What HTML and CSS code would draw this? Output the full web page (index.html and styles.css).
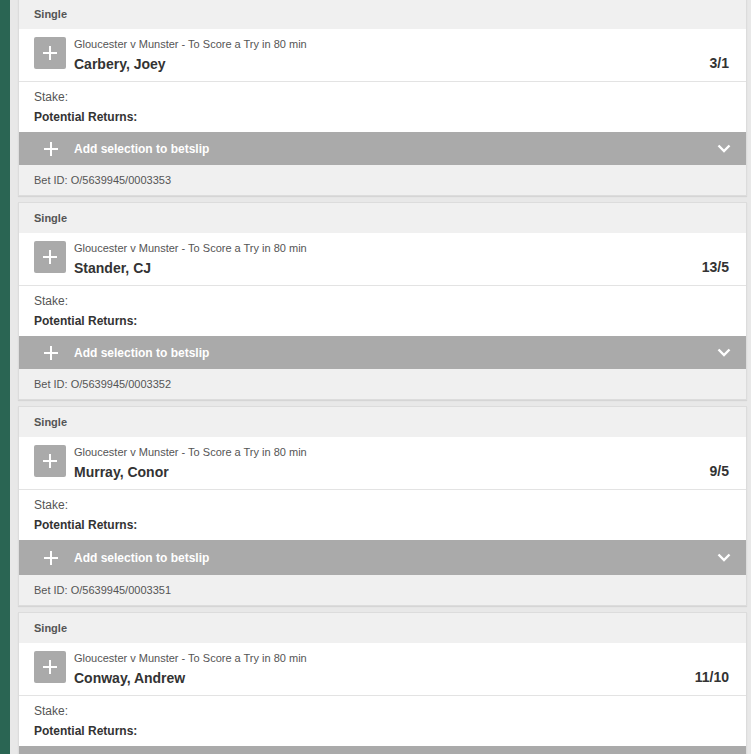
FILE: index.html
```html
<!DOCTYPE html>
<html>
<head>
<meta charset="utf-8">
<link rel="stylesheet" href="styles.css">
</head>
<body>
<div class="page">
  <aside class="rail"></aside>
  <main class="slips">
    <section class="card card--first">
      <div class="card-head">Single</div>
      <div class="sel">
        <span class="sel-box"><svg width="16" height="16" viewBox="0 0 16 16"><path d="M8 1v14M1 8h14" stroke="#fff" stroke-width="2"/></svg></span>
        <div class="sel-info">
          <div class="sel-event">Gloucester v Munster - To Score a Try in 80 min</div>
          <div class="sel-name">Carbery, Joey</div>
        </div>
        <div class="sel-odds">3/1</div>
      </div>
      <div class="stake">
        <div class="stake-label">Stake:</div>
        <div class="stake-returns">Potential Returns:</div>
      </div>
      <div class="add-bar">
        <svg class="add-plus" width="16" height="16" viewBox="0 0 16 16"><path d="M8 1v14M1 8h14" stroke="#fff" stroke-width="2"/></svg>
        <span class="add-text">Add selection to betslip</span>
        <svg class="add-chev" width="14" height="9" viewBox="0 0 14 9"><path d="M1.5 1.5l5.5 5.5 5.5-5.5" fill="none" stroke="#fff" stroke-width="2.4"/></svg>
      </div>
      <div class="bet-id">Bet ID: O/5639945/0003353</div>
    </section>

    <section class="card">
      <div class="card-head">Single</div>
      <div class="sel">
        <span class="sel-box"><svg width="16" height="16" viewBox="0 0 16 16"><path d="M8 1v14M1 8h14" stroke="#fff" stroke-width="2"/></svg></span>
        <div class="sel-info">
          <div class="sel-event">Gloucester v Munster - To Score a Try in 80 min</div>
          <div class="sel-name">Stander, CJ</div>
        </div>
        <div class="sel-odds">13/5</div>
      </div>
      <div class="stake">
        <div class="stake-label">Stake:</div>
        <div class="stake-returns">Potential Returns:</div>
      </div>
      <div class="add-bar">
        <svg class="add-plus" width="16" height="16" viewBox="0 0 16 16"><path d="M8 1v14M1 8h14" stroke="#fff" stroke-width="2"/></svg>
        <span class="add-text">Add selection to betslip</span>
        <svg class="add-chev" width="14" height="9" viewBox="0 0 14 9"><path d="M1.5 1.5l5.5 5.5 5.5-5.5" fill="none" stroke="#fff" stroke-width="2.4"/></svg>
      </div>
      <div class="bet-id">Bet ID: O/5639945/0003352</div>
    </section>

    <section class="card">
      <div class="card-head">Single</div>
      <div class="sel">
        <span class="sel-box"><svg width="16" height="16" viewBox="0 0 16 16"><path d="M8 1v14M1 8h14" stroke="#fff" stroke-width="2"/></svg></span>
        <div class="sel-info">
          <div class="sel-event">Gloucester v Munster - To Score a Try in 80 min</div>
          <div class="sel-name">Murray, Conor</div>
        </div>
        <div class="sel-odds">9/5</div>
      </div>
      <div class="stake">
        <div class="stake-label">Stake:</div>
        <div class="stake-returns">Potential Returns:</div>
      </div>
      <div class="add-bar add-bar--tall">
        <svg class="add-plus" width="16" height="16" viewBox="0 0 16 16"><path d="M8 1v14M1 8h14" stroke="#fff" stroke-width="2"/></svg>
        <span class="add-text">Add selection to betslip</span>
        <svg class="add-chev" width="14" height="9" viewBox="0 0 14 9"><path d="M1.5 1.5l5.5 5.5 5.5-5.5" fill="none" stroke="#fff" stroke-width="2.4"/></svg>
      </div>
      <div class="bet-id">Bet ID: O/5639945/0003351</div>
    </section>

    <section class="card">
      <div class="card-head">Single</div>
      <div class="sel">
        <span class="sel-box"><svg width="16" height="16" viewBox="0 0 16 16"><path d="M8 1v14M1 8h14" stroke="#fff" stroke-width="2"/></svg></span>
        <div class="sel-info">
          <div class="sel-event">Gloucester v Munster - To Score a Try in 80 min</div>
          <div class="sel-name">Conway, Andrew</div>
        </div>
        <div class="sel-odds">11/10</div>
      </div>
      <div class="stake">
        <div class="stake-label">Stake:</div>
        <div class="stake-returns">Potential Returns:</div>
      </div>
      <div class="add-bar">
        <svg class="add-plus" width="16" height="16" viewBox="0 0 16 16"><path d="M8 1v14M1 8h14" stroke="#fff" stroke-width="2"/></svg>
        <span class="add-text">Add selection to betslip</span>
        <svg class="add-chev" width="14" height="9" viewBox="0 0 14 9"><path d="M1.5 1.5l5.5 5.5 5.5-5.5" fill="none" stroke="#fff" stroke-width="2.4"/></svg>
      </div>
      <div class="bet-id">Bet ID: O/5639945/0003350</div>
    </section>
  </main>
</div>
</body>
</html>
```

FILE: styles.css
```css
html, body {
  margin: 0;
  padding: 0;
  height: 100%;
  overflow: hidden;
}

body {
  font-family: "Liberation Sans", Arial, sans-serif;
  background: #e8e8e8;
  color: #333;
}

.page {
  display: flex;
  min-height: 100%;
}

.rail {
  flex: 0 0 10px;
  background: #2a6553;
}

.slips {
  flex: 1;
  display: flex;
  flex-direction: column;
  gap: 6px;
  padding: 0 4px 0 8px;
}

.card {
  background: #fff;
  border: 1px solid #dcdcdc;
  box-shadow: 0 1px 1px rgba(0, 0, 0, 0.08);
  flex-shrink: 0;
}

.card--first {
  margin-top: -2px;
}

.card-head {
  height: 30px;
  display: flex;
  align-items: center;
  padding-left: 15px;
  background: #f0f0f0;
  font-size: 11px;
  font-weight: bold;
  color: #555;
}

.sel {
  height: 53px;
  box-sizing: border-box;
  padding: 8px 17px 8px 15px;
  display: flex;
  align-items: flex-start;
  border-bottom: 1px solid #e3e3e3;
}

.sel-box {
  width: 32px;
  height: 32px;
  border-radius: 2px;
  background: #aaaaaa;
  display: flex;
  align-items: center;
  justify-content: center;
  flex-shrink: 0;
}

.sel-info {
  flex: 1;
  margin-left: 8px;
}

.sel-event {
  font-size: 11px;
  line-height: 14px;
  color: #555;
}

.sel-name {
  margin-top: 4px;
  font-size: 14px;
  line-height: 18px;
  font-weight: bold;
  color: #333;
}

.sel-odds {
  align-self: flex-end;
  margin-bottom: 1px;
  font-size: 14px;
  line-height: 18px;
  font-weight: bold;
  color: #333;
}

.stake {
  height: 50px;
  box-sizing: border-box;
  padding: 5px 15px;
  font-size: 12px;
  line-height: 20px;
}

.stake-label {
  color: #555;
}

.stake-returns {
  font-weight: bold;
  color: #333;
}

.add-bar {
  height: 33px;
  background: #aaaaaa;
  display: flex;
  align-items: center;
  padding: 0 15px 0 24px;
  color: #fff;
}

.add-bar--tall {
  height: 35px;
}

.add-plus {
  flex-shrink: 0;
}

.add-text {
  flex: 1;
  margin-left: 15px;
  font-size: 12px;
  font-weight: bold;
}

.add-chev {
  flex-shrink: 0;
}

.bet-id {
  height: 30px;
  display: flex;
  align-items: center;
  padding-left: 15px;
  background: #f0f0f0;
  font-size: 11px;
  color: #555;
}
```
